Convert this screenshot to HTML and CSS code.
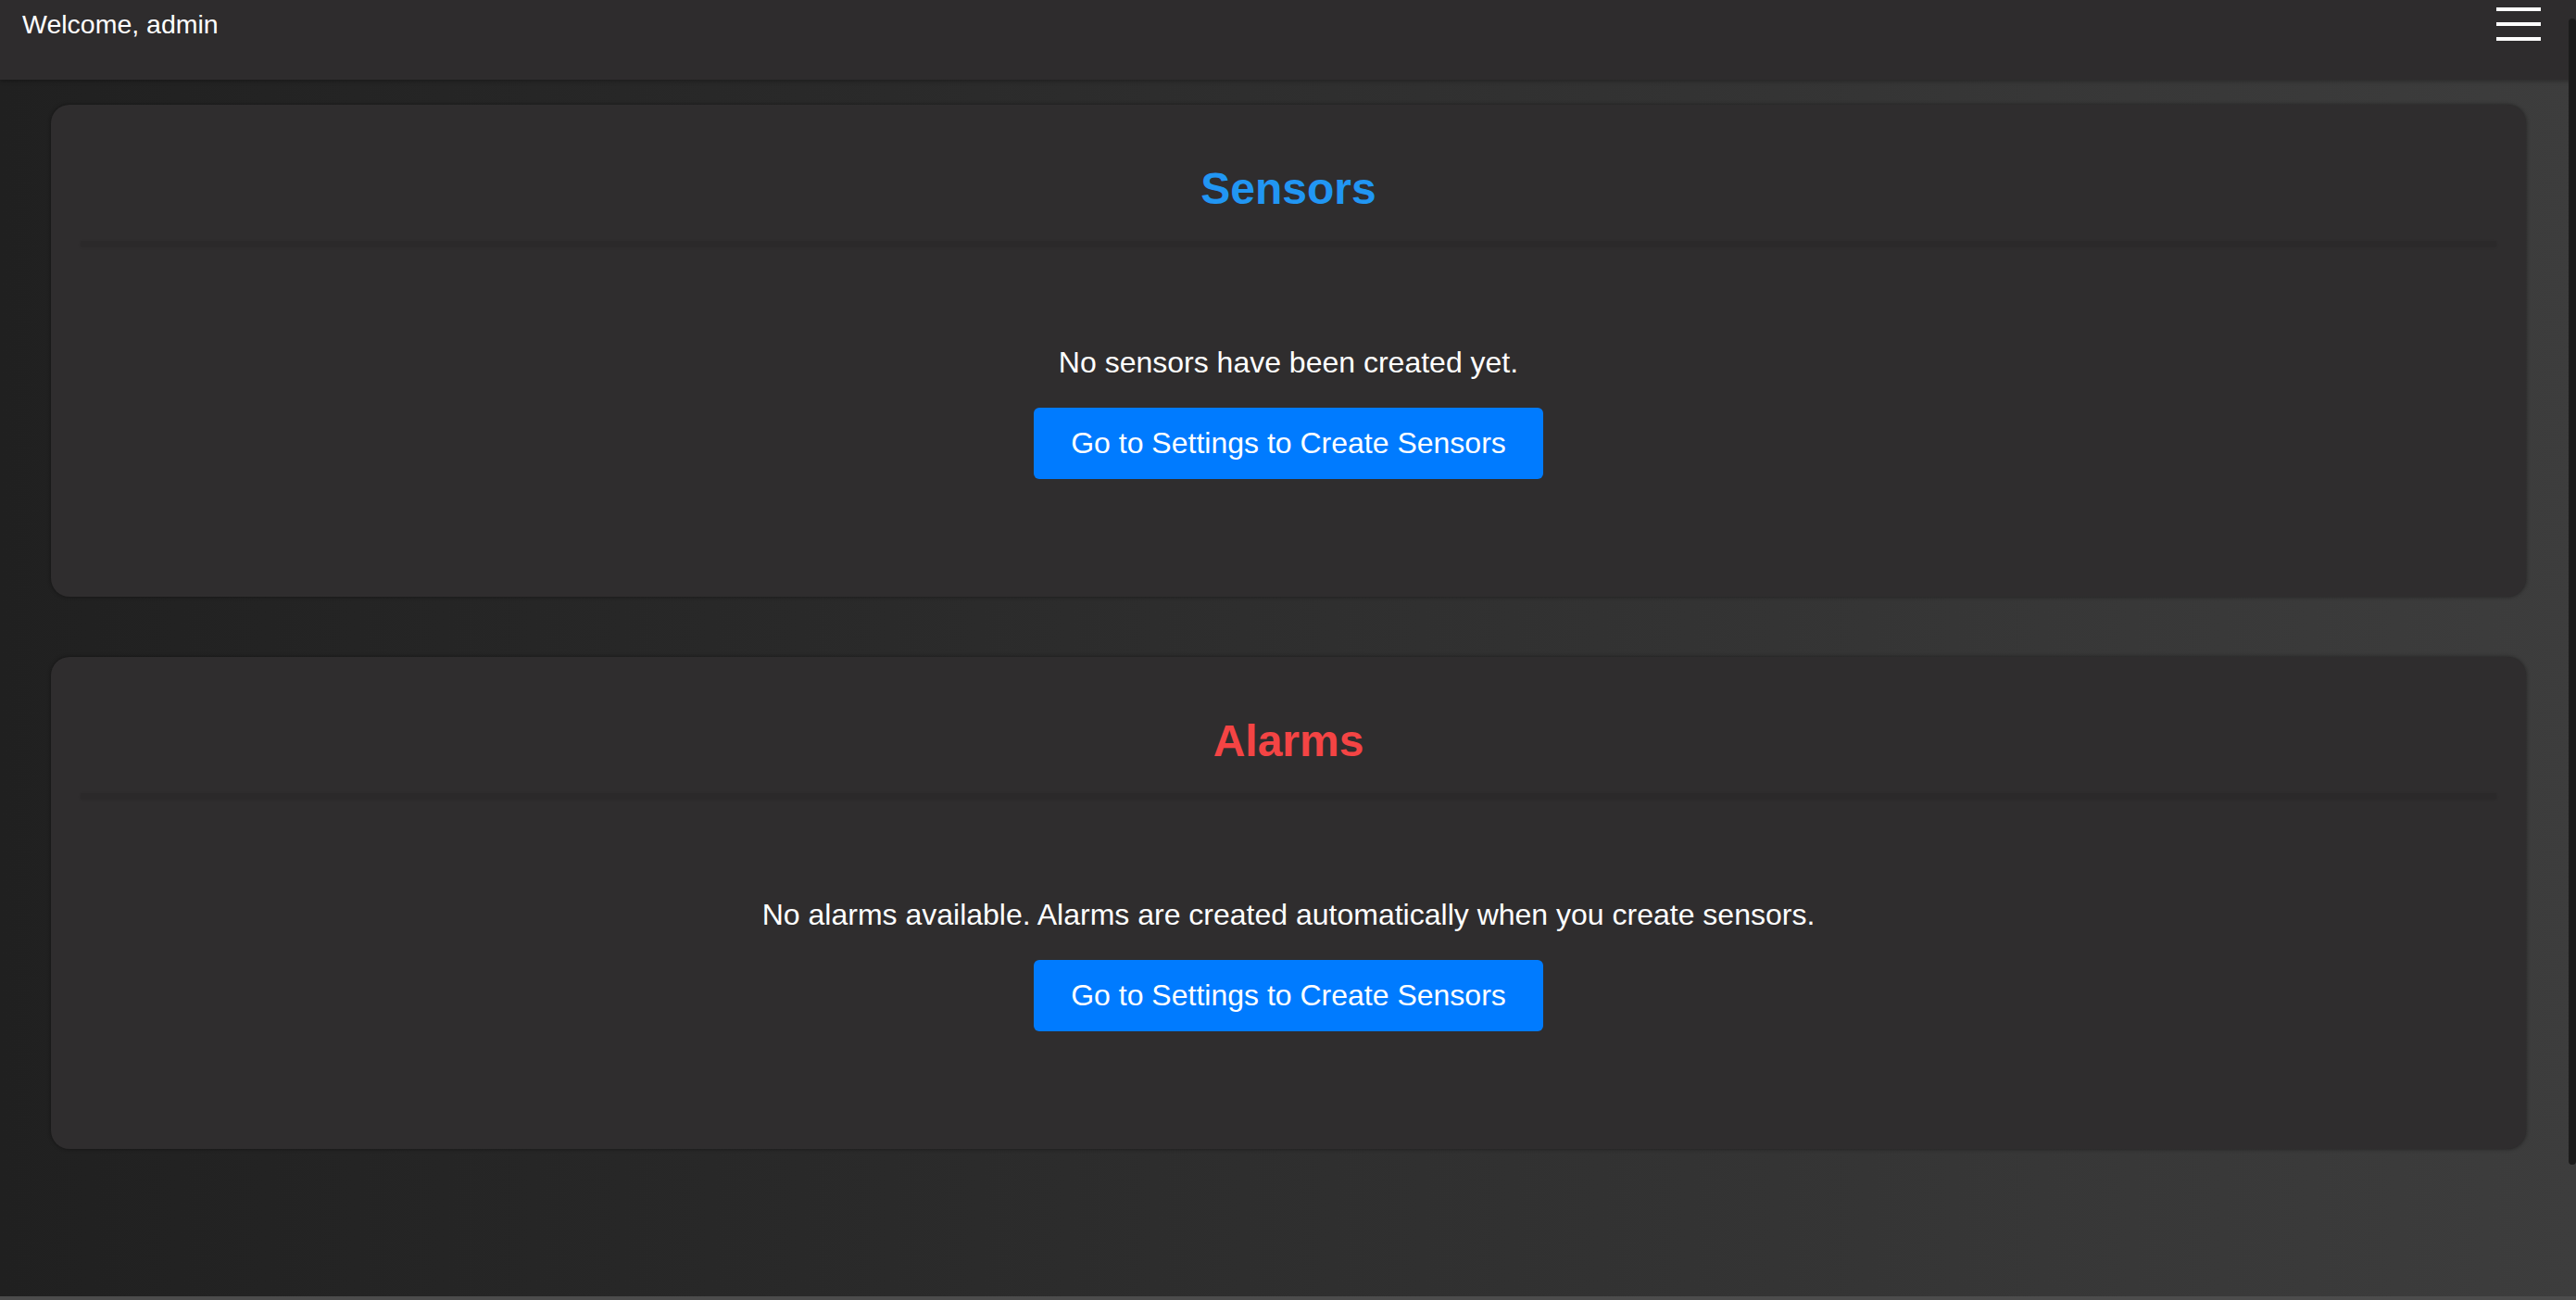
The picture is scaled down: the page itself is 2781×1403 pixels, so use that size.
FILE: index.html
```html
<!DOCTYPE html>
<html>
    <head>
        <title>Dashboard</title>
        <link rel="stylesheet" href="styles.css">
    </head>
    <body>
        <!-- Top bar -->
        <header class="topbar">
            <div class="welcome">Welcome, admin</div>
            <div class="menu-toggle">
                <span></span>
                <span></span>
                <span></span>
            </div>
        </header>

        <main class="content">
            <!-- Sensors -->
            <section class="panel">
                <div class="panel-head">
                    <h2 class="panel-title sensors-title">Sensors</h2>
                </div>
                <div class="panel-rule"></div>
                <div class="empty-state">
                    <p>No sensors have been created yet.</p>
                    <button class="btn-primary">Go to Settings to Create Sensors</button>
                </div>
            </section>

            <!-- Alarms -->
            <section class="panel">
                <div class="panel-head">
                    <h2 class="panel-title alarms-title">Alarms</h2>
                </div>
                <div class="panel-rule"></div>
                <div class="empty-state">
                    <p>No alarms available. Alarms are created automatically when you create sensors.</p>
                    <button class="btn-primary">Go to Settings to Create Sensors</button>
                </div>
            </section>
        </main>

        <div class="scroll-thumb"></div>
    </body>
</html>
```

FILE: styles.css
```css
/* Page */
html, body {
    margin: 0;
    height: 100%;
}

body {
    box-sizing: border-box;
    height: 1403px;
    overflow: hidden;
    position: relative;
    font-family: "Liberation Sans", Arial, sans-serif;
    color: #fff;
    background: linear-gradient(to right, #202020, #3d3d3d);
    border-bottom: 4px solid #4c4c4c;
}

/* Top bar */
.topbar {
    height: 86px;
    box-sizing: border-box;
    display: flex;
    justify-content: space-between;
    align-items: flex-start;
    padding: 8px 38px 0 24px;
    background-color: #2e2c2d;
    box-shadow: 0 2px 4px rgba(0, 0, 0, 0.25);
}

.welcome {
    font-size: 28.5px;
    line-height: 32px;
    padding-top: 2px;
}

.menu-toggle {
    display: flex;
    flex-direction: column;
    gap: 12px;
}

.menu-toggle span {
    display: block;
    width: 48px;
    height: 4px;
    background-color: #fff;
}

/* Content */
.content {
    display: flex;
    flex-direction: column;
    gap: 65px;
    padding: 27px 54px 0 55px;
}

.panel {
    background-color: #2f2d2e;
    border-radius: 20px;
    padding: 32px;
    box-shadow: 0 0 4px rgba(0, 0, 0, 0.45);
}

.panel-head {
    padding: 31px 0 29px;
    text-align: center;
}

.panel-title {
    margin: 0;
    font-size: 48px;
    line-height: 55px;
    font-weight: bold;
}

.sensors-title {
    color: #2196f3;
}

.alarms-title {
    color: #f44444;
}

.panel-rule {
    height: 6px;
    background-color: #2b292a;
    box-shadow: 0 1px 3px rgba(0, 0, 0, 0.1);
}

.empty-state {
    padding: 104px 0 95px;
    text-align: center;
}

.empty-state p {
    margin: 0 0 28px;
    font-size: 32px;
    line-height: 42px;
}

.btn-primary {
    font-family: "Liberation Sans", Arial, sans-serif;
    font-size: 32px;
    line-height: 43px;
    padding: 17px 40px;
    color: #fff;
    background-color: #007bff;
    border: none;
    border-radius: 6px;
}

/* Overlay scrollbar thumb */
.scroll-thumb {
    position: absolute;
    top: 20px;
    right: 0;
    width: 8px;
    height: 1237px;
    border-radius: 4px;
    background-color: #1c1c1c;
}
```
